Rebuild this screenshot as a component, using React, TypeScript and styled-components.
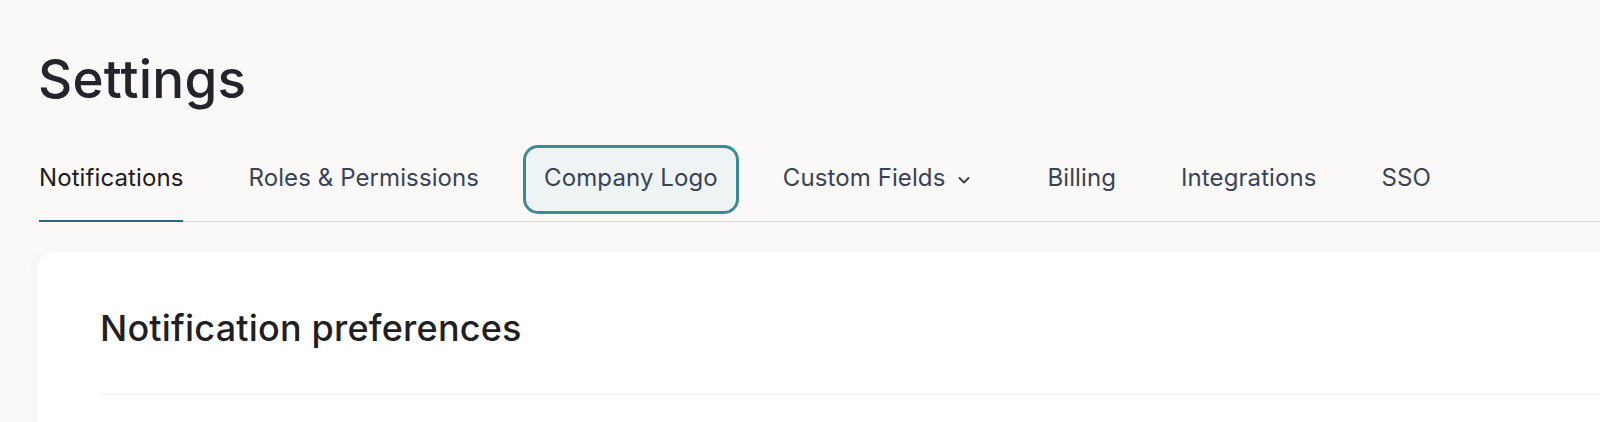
import React from "react";
import styled, { createGlobalStyle } from "styled-components";

const Global = createGlobalStyle`
  html, body { margin: 0; padding: 0; }
  body {
    background: #faf9f7;
    font-family: Inter, "Noto Sans", sans-serif;
    overflow: hidden;
    -webkit-font-smoothing: antialiased;
  }
`;

const Page = styled.div`
  width: 1680px;
  padding: 47px 0 0 37px;
  box-sizing: border-box;
`;

const Title = styled.h1`
  margin: 0 0 0 1px;
  font-size: 53px;
  line-height: 64px;
  font-weight: 500;
  color: #24242c;
  letter-spacing: 0.2px;
`;

const TabBar = styled.nav`
  position: relative;
  z-index: 0;
  display: flex;
  align-items: stretch;
  margin: 53px 0 0 2px;
  border-bottom: 1px solid #dddcdb;
`;

const Tab = styled.button<{ $active?: boolean; $focused?: boolean }>`
  position: relative;
  display: flex;
  align-items: center;
  padding: 0 0 29px;
  margin-right: 65px;
  border: none;
  background: none;
  font-family: inherit;
  font-size: 24px;
  line-height: 28px;
  font-weight: 400;
  letter-spacing: 0.1px;
  color: ${(p) => (p.$active ? "#1c1c22" : "#394358")};
  cursor: pointer;
  &::after {
    content: "";
    position: absolute;
    left: 0;
    right: 0;
    bottom: -1px;
    height: 2px;
    background: ${(p) => (p.$active ? "#1f6a86" : "transparent")};
  }
  ${(p) =>
    p.$focused &&
    `
    &::before {
      content: "";
      position: absolute;
      left: -21px;
      right: -21px;
      top: -19px;
      bottom: 7px;
      border: 3px solid #3e8a94;
      border-radius: 15px;
      background: #eef3f4;
      z-index: -1;
    }
  `}
`;

const TabLabel = styled.span`
  position: relative;
`;

const Chevron = styled.svg`
  width: 16px;
  height: 16px;
  margin: 3px 10px 0 11px;
  color: #394358;
`;

const Card = styled.section`
  margin-top: 30px;
  background: #ffffff;
  border-radius: 17px 0 0 0;
  box-shadow: 0 1px 14px rgba(0, 0, 0, 0.035);
  padding: 54px 0 0 63px;
  height: 200px;
`;

const CardTitle = styled.h2`
  margin: 0;
  font-size: 36px;
  line-height: 44px;
  font-weight: 500;
  color: #1f1f25;
  letter-spacing: 0.2px;
`;

const Divider = styled.hr`
  margin: 44px 0 0 1px;
  border: none;
  border-top: 1px solid #f1f1f0;
`;

const tabs = [
  { label: "Notifications", active: true },
  { label: "Roles & Permissions" },
  { label: "Company Logo", focused: true },
  { label: "Custom Fields", menu: true },
  { label: "Billing" },
  { label: "Integrations" },
  { label: "SSO" },
];

export default function App() {
  return (
    <>
      <Global />
      <Page>
        <Title>Settings</Title>
        <TabBar>
          {tabs.map((t) => (
            <Tab key={t.label} $active={t.active} $focused={t.focused}>
              <TabLabel>{t.label}</TabLabel>
              {t.menu && (
                <Chevron viewBox="0 0 16 16" fill="none">
                  <path
                    d="M3.5 6 L8 10.5 L12.5 6"
                    stroke="currentColor"
                    strokeWidth="2"
                    strokeLinecap="round"
                    strokeLinejoin="round"
                  />
                </Chevron>
              )}
            </Tab>
          ))}
        </TabBar>
        <Card>
          <CardTitle>Notification preferences</CardTitle>
          <Divider />
        </Card>
      </Page>
    </>
  );
}
